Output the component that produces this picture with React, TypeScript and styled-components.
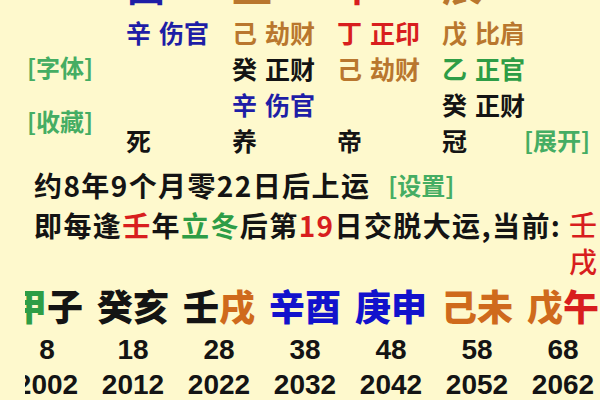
import React from "react";
import styled, { createGlobalStyle } from "styled-components";

const C = {
  bg: "#FEF9CD",
  blue: "#1E1EA6",
  pblue: "#1212CC",
  brown: "#B9772E",
  orange: "#CF6A1C",
  red: "#D81E1E",
  green: "#2E9D46",
  link: "#45AD63",
  black: "#141414",
};

const GlobalStyle = createGlobalStyle`
  html, body {
    margin: 0;
    padding: 0;
    background: ${C.bg};
    overflow: hidden;
    width: 600px;
    height: 400px;
  }
  body {
    font-family: "Noto Sans CJK SC", "Noto Sans", sans-serif;
    color: ${C.black};
  }
`;

const Page = styled.div`
  margin-top: -33px;
  width: 600px;
`;

const Chart = styled.section`
  display: flex;
  align-items: flex-start;
`;

const Side = styled.div`
  width: 127px;
  box-sizing: border-box;
  padding: 85px 0 0 27px;
  display: flex;
  flex-direction: column;
  gap: 24px;
`;

const Link = styled.span<{ $ml?: number }>`
  font-family: "Noto Sans CJK SC", sans-serif;
  font-size: 24px;
  line-height: 30px;
  font-weight: 700;
  letter-spacing: 0;
  color: ${C.link};
  white-space: nowrap;
  margin-left: ${(p) => p.$ml ?? 0}px;
`;

const Grid = styled.div`
  display: grid;
  grid-template-columns: 106px 105px 105px 82px auto;
  grid-template-rows: 47px repeat(4, 36px);
  margin-left: -1px;
`;

const Big = styled.div<{ $c: string }>`
  font-size: 40px;
  line-height: 40px;
  font-weight: 700;
  color: ${(p) => p.$c};
  align-self: start;
  margin-top: -3px;
`;

const Cell = styled.div<{ $c?: string }>`
  font-size: 25px;
  line-height: 36px;
  font-weight: 700;
  color: ${(p) => p.$c ?? C.black};
  white-space: nowrap;
`;

const Stem = styled.span`
  margin-right: 8px;
`;

const GridLink = styled(Link)`
  line-height: 36px;
`;

const Line = styled.div<{ $mt: number }>`
  display: flex;
  align-items: flex-start;
  padding-left: 34px;
  margin-top: ${(p) => p.$mt}px;
  font-size: 28px;
  line-height: 38px;
  font-weight: 700;
  letter-spacing: 1.4px;
  white-space: nowrap;
`;

const LineLink = styled(Link)`
  line-height: 38px;
`;

const Hi = styled.span<{ $c: string }>`
  color: ${(p) => p.$c};
`;

const Current = styled.span`
  display: flex;
  flex-direction: column;
  color: ${C.red};
  font-weight: 500;
  line-height: 37px;
`;

const Strip = styled.div`
  margin-left: 25px;
  margin-top: 3px;
  overflow: hidden;
`;

const Track = styled.div`
  display: grid;
  grid-template-columns: repeat(7, 86px);
  margin-left: -21px;
`;

const Col = styled.div`
  display: flex;
  flex-direction: column;
  align-items: center;
  white-space: nowrap;
`;

const Pillar = styled.div`
  font-size: 36px;
  line-height: 44px;
  font-weight: 900;
  margin-bottom: 5px;
`;

const Num = styled.div`
  font-family: "Liberation Sans", Arial, sans-serif;
  font-size: 28px;
  line-height: 35px;
  font-weight: 700;
  color: ${C.black};
`;

type Entry = { s: string; c: string; g: string } | null;

const bigs = [
  { t: "酉", c: C.blue },
  { t: "丑", c: C.brown },
  { t: "午", c: C.red },
  { t: "辰", c: C.brown },
];

const rows: Entry[][] = [
  [
    { s: "辛", g: "伤官", c: C.blue },
    { s: "己", g: "劫财", c: C.brown },
    { s: "丁", g: "正印", c: C.red },
    { s: "戊", g: "比肩", c: C.brown },
  ],
  [
    null,
    { s: "癸", g: "正财", c: C.black },
    { s: "己", g: "劫财", c: C.brown },
    { s: "乙", g: "正官", c: C.green },
  ],
  [
    null,
    { s: "辛", g: "伤官", c: C.blue },
    null,
    { s: "癸", g: "正财", c: C.black },
  ],
];

const stages = ["死", "养", "帝", "冠"];

const dayun = [
  { a: "甲", ac: C.green, b: "子", bc: C.black, age: "8", year: "2002" },
  { a: "癸", ac: C.black, b: "亥", bc: C.black, age: "18", year: "2012" },
  { a: "壬", ac: C.black, b: "戌", bc: C.orange, age: "28", year: "2022" },
  { a: "辛", ac: C.pblue, b: "酉", bc: C.pblue, age: "38", year: "2032" },
  { a: "庚", ac: C.pblue, b: "申", bc: C.pblue, age: "48", year: "2042" },
  { a: "己", ac: C.orange, b: "未", bc: C.orange, age: "58", year: "2052" },
  { a: "戊", ac: C.orange, b: "午", bc: C.red, age: "68", year: "2062" },
];

export default function App() {
  return (
    <>
      <GlobalStyle />
      <Page>
        <Chart>
          <Side>
            <Link>[字体]</Link>
            <Link>[收藏]</Link>
          </Side>
          <Grid>
            {bigs.map((b, i) => (
              <Big key={`b${i}`} $c={b.c}>
                {b.t}
              </Big>
            ))}
            <div />
            {rows.map((r, ri) => (
              <React.Fragment key={ri}>
                {r.map((e, ci) =>
                  e ? (
                    <Cell key={ci} $c={e.c}>
                      <Stem>{e.s}</Stem>
                      {e.g}
                    </Cell>
                  ) : (
                    <Cell key={ci} />
                  )
                )}
                <div />
              </React.Fragment>
            ))}
            {stages.map((s) => (
              <Cell key={s}>{s}</Cell>
            ))}
            <GridLink>[展开]</GridLink>
          </Grid>
        </Chart>

        <Line $mt={8}>
          约8年9个月零22日后上运
          <LineLink $ml={18}>[设置]</LineLink>
        </Line>
        <Line $mt={2}>
          <span>
            即每逢<Hi $c={C.red}>壬</Hi>年<Hi $c={C.green}>立冬</Hi>后第
            <Hi $c={C.red}>19</Hi>日交脱大运,当前:&nbsp;
          </span>
          <Current>
            <span>壬</span>
            <span>戌</span>
          </Current>
        </Line>

        <Strip>
          <Track>
            {dayun.map((d) => (
              <Col key={d.year}>
                <Pillar>
                  <Hi $c={d.ac}>{d.a}</Hi>
                  <Hi $c={d.bc}>{d.b}</Hi>
                </Pillar>
                <Num>{d.age}</Num>
                <Num>{d.year}</Num>
              </Col>
            ))}
          </Track>
        </Strip>
      </Page>
    </>
  );
}
